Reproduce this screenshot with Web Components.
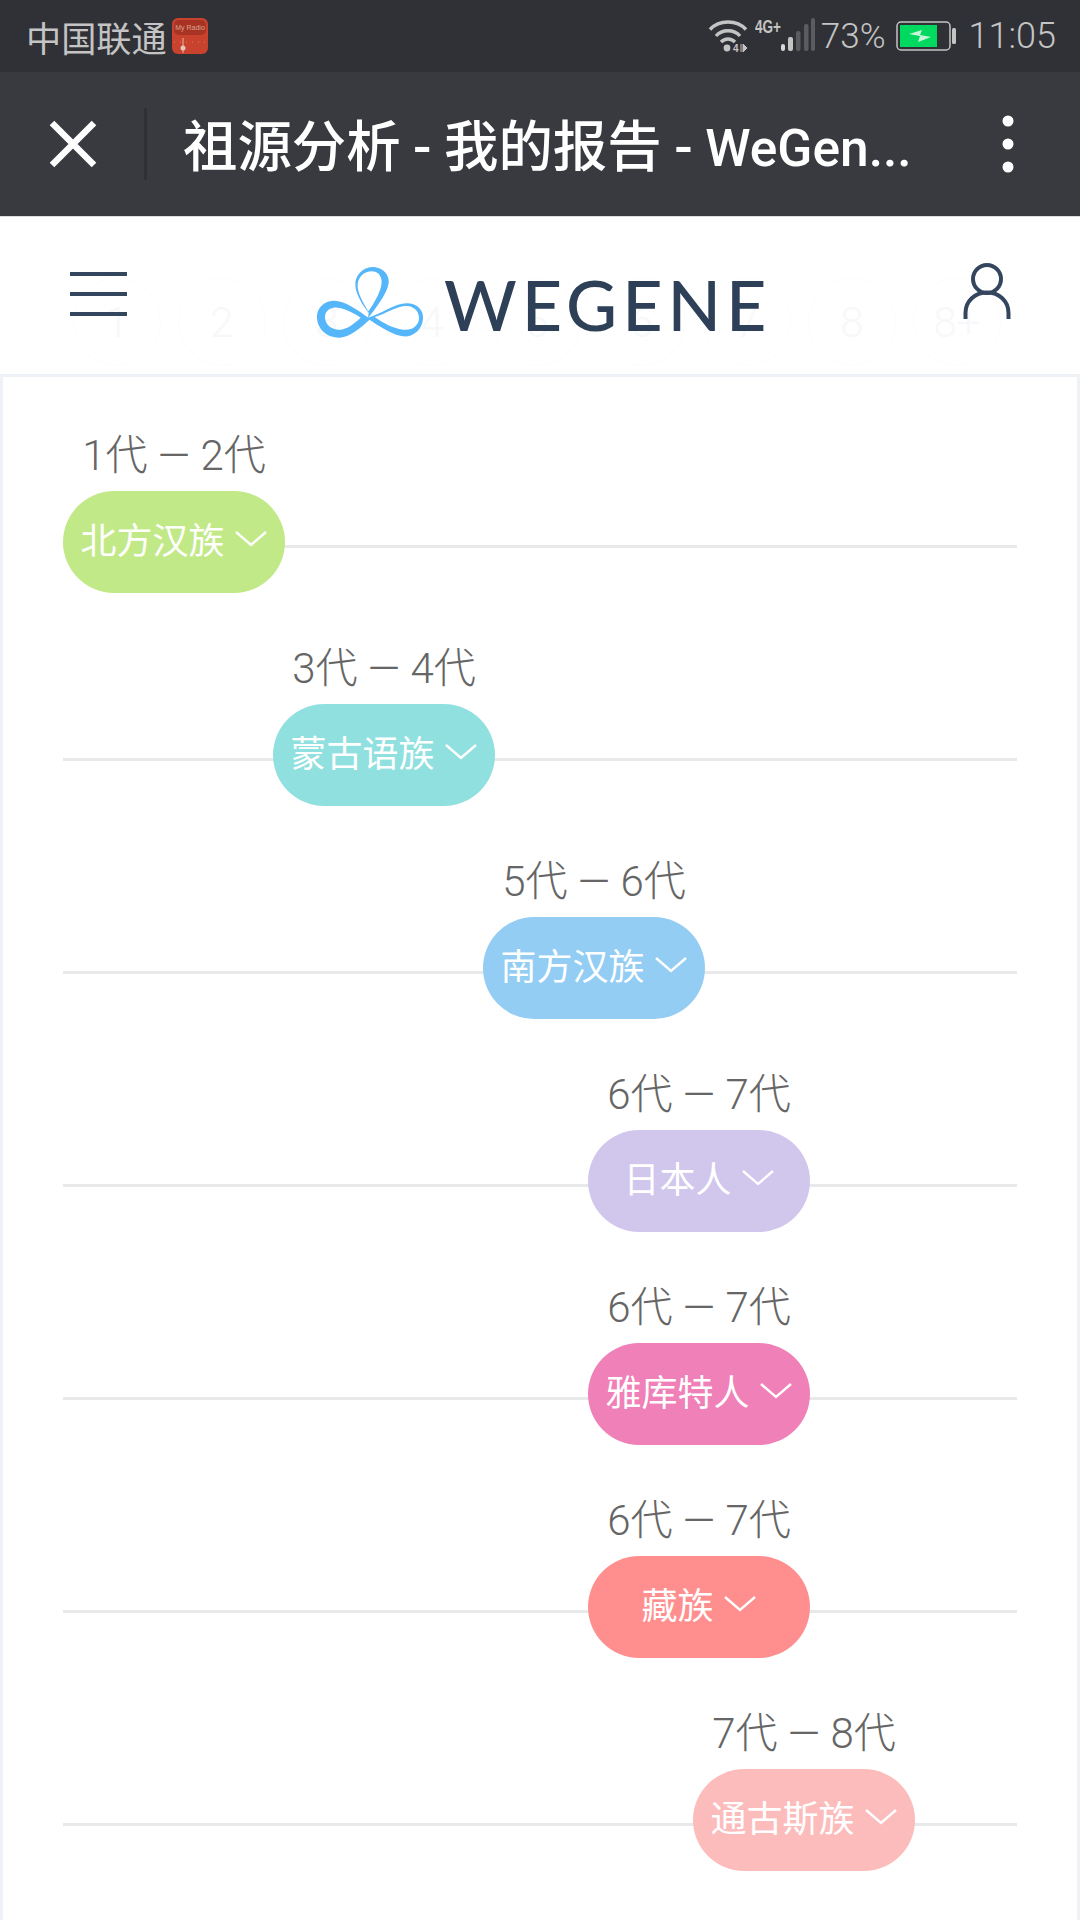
<!DOCTYPE html>
<html lang="zh">
<head>
<meta charset="utf-8">
<title>WeGene</title>
<style>
    html, body {
        margin: 0;
        padding: 0;
        width: 1080px;
        height: 1920px;
        overflow: hidden;
        background: #fff;
        font-family: Roboto, "Noto Sans CJK SC", sans-serif;
    }
</style>
</head>
<body>
<status-bar></status-bar>
<app-toolbar>祖源分析 - 我的报告 - <span style="font-size:51.5px">WeGen...</span></app-toolbar>
<site-header></site-header>
<report-list>
    <ancestor-row range="1代 — 2代" name="北方汉族" color="#c2e987" offset="0"></ancestor-row>
    <ancestor-row range="3代 — 4代" name="蒙古语族" color="#91e0e0" offset="210"></ancestor-row>
    <ancestor-row range="5代 — 6代" name="南方汉族" color="#93cdf4" offset="420"></ancestor-row>
    <ancestor-row range="6代 — 7代" name="日本人" color="#d1c6ec" offset="525"></ancestor-row>
    <ancestor-row range="6代 — 7代" name="雅库特人" color="#ef80b8" offset="525"></ancestor-row>
    <ancestor-row range="6代 — 7代" name="藏族" color="#ff8f8f" offset="525"></ancestor-row>
    <ancestor-row range="7代 — 8代" name="通古斯族" color="#fcbcbc" offset="630"></ancestor-row>
</report-list>

<script>
class StatusBar extends HTMLElement {
    constructor() {
        super();
        this.attachShadow({ mode: 'open' }).innerHTML = `
        <style>
            :host {
                display: flex;
                align-items: center;
                height: 72px;
                box-sizing: border-box;
                padding: 0 24px 0 26px;
                background: #303136;
                color: #c4c4c4;
                font-family: Roboto, "Noto Sans CJK SC", sans-serif;
                font-size: 35px;
                font-weight: 400;
            }
            .carrier { font-size: 35.2px; }
            .radio { margin-left: 5px; display: block; }
            .spacer { flex: 1; }
            .pct { font-size: 35px; font-weight: 300; margin-left: 6px; }
            .batt { margin-left: 10px; display: block; }
            .time { font-size: 36px; font-weight: 300; margin-left: 13px; }
            svg text { font-family: "Liberation Sans", sans-serif; }
        </style>
        <span class="carrier">中国联通</span>
        <svg class="radio" width="36" height="36" viewBox="0 0 36 36">
            <rect width="36" height="36" rx="6" fill="#c8422d"/>
            <rect x="2" y="2" width="32" height="15" rx="5" fill="#a83323"/>
            <text x="18" y="12" font-size="7" fill="#d8a596" text-anchor="middle">My Radio</text>
            <path d="M2 24h32" stroke="#dd7a68" stroke-width="1" stroke-dasharray="1 5"/>
            <path d="M11 20v15" stroke="#e6b3a8" stroke-width="1"/>
            <circle cx="11" cy="30" r="2.5" fill="#e6c6bf"/>
        </svg>
        <span class="spacer"></span>
        <svg width="40" height="36" viewBox="0 0 40 36" style="display:block">
            <g fill="none" stroke="#c4c4c4" stroke-width="3.4">
                <path d="M2 11.5C11 1.5 29 1.500 38 11.500"/>
                <path d="M8 18C14 11 26 11 32 18"/>
                <path d="M13 24C17 20 23 20 27 24"/>
            </g>
            <circle cx="19" cy="30" r="3.400" fill="#c4c4c4"/>
            <text x="25" y="34" font-size="10" font-weight="700" fill="#c4c4c4">4</text>
            <path d="M33 26v8M35 26l4 4-4 4z" fill="#c4c4c4" stroke="#c4c4c4" stroke-width="1"/>
        </svg>
        <svg width="60" height="36" viewBox="0 0 60 36" style="display:block;margin-left:7px">
            <text x="0" y="15" font-size="18" font-weight="700" fill="#c4c4c4" textLength="26" lengthAdjust="spacingAndGlyphs">4G+</text>
            <rect x="26" y="26" width="4" height="7" rx="2" fill="#d8d8d8"/>
            <rect x="33" y="19" width="5" height="14" rx="2" fill="#c4c4c4"/>
            <rect x="41" y="13" width="4.500" height="20" rx="2" fill="#5b5c60"/>
            <rect x="49" y="6" width="4.500" height="27" rx="2" fill="#5b5c60"/>
            <rect x="56" y="0" width="4" height="33" rx="2" fill="#5b5c60"/>
        </svg>
        <span class="pct">73%</span>
        <svg class="batt" width="60" height="30" viewBox="0 0 60 30">
            <rect x="1" y="1" width="53" height="28" rx="4" fill="none" stroke="#c4c4c4" stroke-width="1.500"/>
            <rect x="4" y="4" width="37" height="22" fill="#00d95f"/>
            <path d="M13 13l13-4-2 5 11 2-13 5 2-6z" fill="#c9f5d9"/>
            <rect x="56" y="7" width="4" height="16" rx="1.500" fill="#c4c4c4"/>
        </svg>
        <span class="time">11:05</span>
        `;
    }
}

const toolbarTemplate = document.createElement('template');
toolbarTemplate.innerHTML = `
    <style>
        :host {
            display: flex;
            align-items: center;
            height: 144px;
            background: #383a40;
            color: #fff;
            font-family: Roboto, "Noto Sans CJK SC", sans-serif;
        }
        .close { display: block; margin-left: 49px; }
        .divider { width: 3px; height: 72px; margin-left: 47px; background: #2f3035; }
        .title {
            flex: 1;
            margin-left: 36px;
            margin-top: -4px;
            font-size: 54.4px;
            font-weight: 500;
            word-spacing: -1px;
            white-space: nowrap;
        }
        .dots { display: block; margin-right: 66px; }
    </style>
    <svg class="close" width="48" height="48" viewBox="0 0 48 48">
        <path d="M3 3L45 45M45 3L3 45" stroke="#fff" stroke-width="6.500" fill="none"/>
    </svg>
    <div class="divider"></div>
    <div class="title"><slot></slot></div>
    <svg class="dots" width="12" height="58" viewBox="0 0 12 58">
        <circle cx="6" cy="6" r="5.500" fill="#fff"/>
        <circle cx="6" cy="29" r="5.500" fill="#fff"/>
        <circle cx="6" cy="52" r="5.500" fill="#fff"/>
    </svg>
`;

class AppToolbar extends HTMLElement {
    constructor() {
        super();
        this.attachShadow({ mode: 'open' }).appendChild(toolbarTemplate.content.cloneNode(true));
    }
}

class SiteHeader extends HTMLElement {
    constructor() {
        super();
        const marks = ['1', '2', '3', '4', '5', '6', '7', '8', '8+'];
        this.attachShadow({ mode: 'open' }).innerHTML = `
        <style>
            :host {
                display: flex;
                align-items: center;
                position: relative;
                height: 161px;
                box-sizing: border-box;
                border-top: 1px solid #dcdddf;
                border-bottom: 3px solid #eef1f5;
                background: #fff;
            }
            /* the page scrolled under a translucent header */
            .under {
                position: absolute;
                left: 73px;
                top: 61px;
                display: flex;
                gap: 17px;
            }
            .under span {
                width: 88px;
                height: 88px;
                box-sizing: border-box;
                border: 1px solid #fdfdfe;
                border-radius: 50%;
                display: flex;
                align-items: center;
                justify-content: center;
                color: #f7f8f9;
                font: 300 42px Roboto, sans-serif;
            }
            .menu, .logo, .user { position: relative; }
            .menu { display: block; margin-left: 70px; margin-top: -3px; }
            .logo { display: flex; align-items: center; margin-left: 190px; margin-top: 14px; }
            .logo svg { display: block; }
            .word {
                margin-left: 19px;
                margin-top: 2px;
                font: 500 70px Lato, sans-serif;
                letter-spacing: 5px;
                color: #2e4057;
                line-height: 70px;
            }
            .user { display: block; margin-left: auto; margin-right: 69px; margin-top: -8px; }
        </style>
        <div class="under">${marks.map(m => `<span>${m}</span>`).join('')}</div>
        <svg class="menu" width="57" height="46" viewBox="0 0 57 46">
            <path d="M1 3h55M1 23h55M1 43h55" stroke="#34465e" stroke-width="4.200" stroke-linecap="round"/>
        </svg>
        <div class="logo">
            <svg width="108" height="73" viewBox="52 50 324 219">
                <path fill="#55b6fa" fill-rule="evenodd" d="M212 209C172 180 132 152 100 154C68 157 50 180 52 206C54 242 85 266 120 265C152 264 184 234 212 209ZM183 205C156 188 125 173 102 175C85 177 75 190 76 206C78 227 97 242 120 241C142 240 164 223 183 205Z"/>
                <path fill="#55b6fa" fill-rule="evenodd" d="M205 207C238 165 270 120 267 92C264 67 240 52 218 53C190 54 165 78 167 108C168 135 190 170 207 190ZM206 186C190 160 172 130 174 105C176 82 195 66 216 66C235 66 246 80 246 98C246 122 225 160 206 186Z"/>
                <path fill="#55b6fa" fill-rule="evenodd" d="M205 205C245 195 285 160 325 162C355 164 372 185 370 208C368 241 340 264 310 261C280 258 240 232 202 207ZM225 203C255 195 290 170 322 170C345 171 359 188 358 208C357 227 340 243 312 241C285 239 250 222 225 203Z"/>
            </svg>
            <span class="word">WEGENE</span>
        </div>
        <svg class="user" width="48" height="58" viewBox="0 0 48 58">
            <circle cx="24" cy="16" r="14" fill="none" stroke="#34465e" stroke-width="4"/>
            <path d="M2.500 56V50C2.500 38 12 29.500 24 29.500S45.500 38 45.500 50V56" fill="none" stroke="#34465e" stroke-width="4"/>
        </svg>
        `;
    }
}

const listTemplate = document.createElement('template');
listTemplate.innerHTML = `
    <style>
        :host {
            display: flex;
            flex-direction: column;
            gap: 51px;
            box-sizing: border-box;
            height: 1545px;
            padding: 54px 60px 0;
            border-left: 3px solid #eef1f5;
            border-right: 3px solid #eef1f5;
            background: #fff;
        }
    </style>
    <slot></slot>
`;

class ReportList extends HTMLElement {
    constructor() {
        super();
        this.attachShadow({ mode: 'open' }).appendChild(listTemplate.content.cloneNode(true));
    }
}

const rowTemplate = document.createElement('template');
rowTemplate.innerHTML = `
    <style>
        :host {
            display: flex;
            height: 162px;
            font-family: Roboto, "Noto Sans CJK SC", sans-serif;
            background: linear-gradient(#e8e9eb, #e8e9eb) 0 114px / 100% 3px no-repeat;
        }
        .item {
            width: 222px;
            display: flex;
            flex-direction: column;
            align-items: center;
        }
        .range {
            height: 60px;
            font-size: 42px;
            font-weight: 300;
            line-height: 50px;
            color: #666;
            white-space: nowrap;
        }
        .pill {
            width: 222px;
            height: 102px;
            border-radius: 51px;
            display: flex;
            align-items: center;
            justify-content: center;
            gap: 9px;
            color: #fff;
            font-size: 36px;
            font-weight: 400;
        }
        .name { margin-top: -9px; }
        .pill svg { display: block; margin-top: -6px; }
    </style>
    <div class="item">
        <div class="range"></div>
        <div class="pill">
            <span class="name"></span>
            <svg width="34" height="18" viewBox="0 0 34 18">
                <path d="M2 2L17 15L32 2" fill="none" stroke="#fff" stroke-width="2.400"/>
            </svg>
        </div>
    </div>
`;

class AncestorRow extends HTMLElement {
    constructor() {
        super();
        this._shadowRoot = this.attachShadow({ mode: 'open' });
        this._shadowRoot.appendChild(rowTemplate.content.cloneNode(true));

        this.itemEl = this._shadowRoot.querySelector('.item');
        this.rangeEl = this._shadowRoot.querySelector('.range');
        this.pillEl = this._shadowRoot.querySelector('.pill');
        this.nameEl = this._shadowRoot.querySelector('.name');
    }

    connectedCallback() {
        this.rangeEl.textContent = this.getAttribute('range');
        this.nameEl.textContent = this.getAttribute('name');
        this.pillEl.style.background = this.getAttribute('color');
        this.itemEl.style.marginLeft = this.getAttribute('offset') + 'px';
    }
}

window.customElements.define('status-bar', StatusBar);
window.customElements.define('app-toolbar', AppToolbar);
window.customElements.define('site-header', SiteHeader);
window.customElements.define('report-list', ReportList);
window.customElements.define('ancestor-row', AncestorRow);
</script>
</body>
</html>
